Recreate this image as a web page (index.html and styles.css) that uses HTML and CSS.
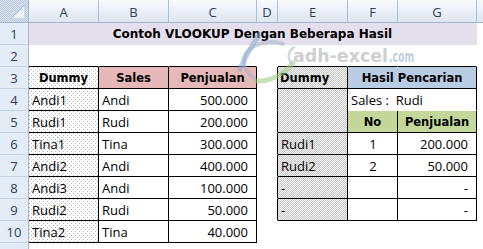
FILE: index.html
```html
<!DOCTYPE html>
<html>
<head>
<meta charset="utf-8">
<title>Contoh VLOOKUP Dengan Beberapa Hasil</title>
<link rel="stylesheet" href="styles.css">
</head>
<body>
<div class="sheet">
  <div class="corner"><svg class="corner-tri" width="28" height="22" viewBox="0 0 28 22"><polygon points="25,5 25,19 11,19" fill="#eef3fa" stroke="#b9c9dd" stroke-width="1"/></svg></div>
  <div class="ch">A</div><div class="ch">B</div><div class="ch">C</div><div class="ch">D</div><div class="ch">E</div><div class="ch">F</div><div class="ch">G</div><div class="ch"></div>

  <div class="rh">1</div><div class="c title">Contoh VLOOKUP Dengan Beberapa Hasil</div><div class="c"></div>

  <div class="rh">2</div><div class="c bb"></div><div class="c bb"></div><div class="c bb"></div><div class="c"></div><div class="c bb"></div><div class="c bb"></div><div class="c bb"></div><div class="c"></div>

  <div class="rh">3</div><div class="c hd dot br bb">Dummy</div><div class="c hd pink br bb">Sales</div><div class="c hd pink br bb">Penjualan</div><div class="c br"></div><div class="c hd left dense br bb">Dummy</div><div class="c hd blue br bb span2">Hasil Pencarian</div><div class="c"></div>

  <div class="rh">4</div><div class="c dot br bb">Andi1</div><div class="c br bb">Andi</div><div class="c num br bb">500.000</div><div class="c br"></div><div class="c dense br bb rspan2"></div><div class="c br span2">Sales :&nbsp; Rudi</div><div class="c"></div>

  <div class="rh">5</div><div class="c dot br bb">Rudi1</div><div class="c br bb">Rudi</div><div class="c num br bb">200.000</div><div class="c br"></div><div class="c hd green br bb">No</div><div class="c hd green br bb">Penjualan</div><div class="c"></div>

  <div class="rh">6</div><div class="c dot br bb">Tina1</div><div class="c br bb">Tina</div><div class="c num br bb">300.000</div><div class="c br"></div><div class="c dense br bb">Rudi1</div><div class="c mid br bb">1</div><div class="c num br bb">200.000</div><div class="c"></div>

  <div class="rh">7</div><div class="c dot br bb">Andi2</div><div class="c br bb">Andi</div><div class="c num br bb">400.000</div><div class="c br"></div><div class="c dense br bb">Rudi2</div><div class="c mid br bb">2</div><div class="c num br bb">50.000</div><div class="c"></div>

  <div class="rh">8</div><div class="c dot br bb">Andi3</div><div class="c br bb">Andi</div><div class="c num br bb">100.000</div><div class="c br"></div><div class="c dense br bb">-</div><div class="c br bb"></div><div class="c num br bb">-</div><div class="c"></div>

  <div class="rh">9</div><div class="c dot br bb">Rudi2</div><div class="c br bb">Rudi</div><div class="c num br bb">50.000</div><div class="c br"></div><div class="c dense br bb">-</div><div class="c br bb"></div><div class="c num br bb">-</div><div class="c"></div>

  <div class="rh">10</div><div class="c dot br bb">Tina2</div><div class="c br bb">Tina</div><div class="c num br bb">40.000</div><div class="c"></div><div class="c"></div><div class="c"></div><div class="c"></div><div class="c"></div>

  <div class="rh"></div><div class="c"></div><div class="c"></div><div class="c"></div><div class="c"></div><div class="c"></div><div class="c"></div><div class="c"></div><div class="c"></div>
</div>

<svg class="watermark" width="200" height="60" viewBox="228 30 200 60">
  <path d="M283,44 C264,38 244,48 244,60 C244,68 248,74 254,78" fill="none" stroke="#9fb1c4" stroke-width="4" stroke-linecap="round" opacity="0.5"/>
  <path d="M259,35 C253,44 246,55 240,69" fill="none" stroke="#86a9d4" stroke-width="5" stroke-linecap="round" opacity="0.55"/>
  <path d="M256,81 C270,82 284,74 293,63" fill="none" stroke="#9ccb7c" stroke-width="5" stroke-linecap="round" opacity="0.55"/>
  <path d="M294,47 C288,51 287,59 292,64" fill="none" stroke="#b8c8da" stroke-width="2.5" stroke-linecap="round" opacity="0.7"/>
  <text class="wm-main" x="293" y="62" textLength="95" lengthAdjust="spacingAndGlyphs">adh-excel</text>
  <text class="wm-com" transform="translate(389,62) scale(0.62,1)" x="0" y="0">.com</text>
</svg>
</body>
</html>
```

FILE: styles.css
```css
html, body {
  margin: 0;
  padding: 0;
  background: #ffffff;
  overflow: hidden;
}

body {
  width: 483px;
  height: 249px;
  position: relative;
  font-family: "Open Sans", "Liberation Sans", sans-serif;
}

.sheet {
  display: grid;
  grid-template-columns: 29px 70px 70px 88px 21px 70px 50px 79px 16px;
  grid-template-rows: 23px repeat(10, 22px) 7px;
  width: 483px;
}

.sheet > div {
  box-sizing: border-box;
  min-width: 0;
  overflow: hidden;
  white-space: nowrap;
}

.corner {
  background-color: #dde7f3;
  background-image:
    conic-gradient(from 270deg at 1px 1px, #b7c8de 0 25%, transparent 0 100%),
    conic-gradient(from 270deg at 1px 1px, #b7c8de 0 25%, transparent 0 100%);
  background-size: 2px 2px, 2px 2px;
  background-position: 0 0, 1px 1px;
  border-right: 1px solid #9eb6ce;
  border-bottom: 1px solid #9eb6ce;
  position: relative;
}

.corner-tri {
  display: block;
}

.ch {
  background: linear-gradient(#f9fbfd, #e9eef6 55%, #dfe6f0);
  border-right: 1px solid #a9bfd6;
  border-bottom: 1px solid #9eb6ce;
  display: flex;
  align-items: center;
  justify-content: center;
  font-size: 13px;
  line-height: 16px;
  color: #2b3f5c;
  padding-top: 1px;
}

.rh {
  background: #e4ecf7;
  border-right: 1px solid #9eb6ce;
  border-bottom: 1px solid #c5d3e5;
  display: flex;
  align-items: center;
  justify-content: center;
  font-size: 13px;
  line-height: 16px;
  color: #2b3f5c;
}

.c {
  border-right: 1px solid transparent;
  border-bottom: 1px solid transparent;
  display: flex;
  align-items: flex-end;
  padding: 0 2px 2px 3px;
  font-size: 13px;
  line-height: 16px;
  color: #000;
}

.br { border-right-color: #000 !important; }
.bb { border-bottom-color: #000 !important; }

.span2 { grid-column: span 2; }
.rspan2 { grid-row: span 2; }

.title {
  grid-column: span 7;
  background: #e4dfec;
  justify-content: center;
  align-items: center;
  padding: 0;
  font-family: "DejaVu Sans", sans-serif;
  font-weight: bold;
  font-size: 12px;
}

.hd {
  font-family: "DejaVu Sans", sans-serif;
  font-weight: bold;
  font-size: 11.5px;
  justify-content: center;
  align-items: center;
  padding: 1px 2px 0 2px;
}

.hd.left {
  justify-content: flex-start;
}

.num {
  justify-content: flex-end;
  padding-right: 8px;
}

.mid {
  justify-content: center;
}

.pink { background-color: #e6b9b8; }
.blue { background-color: #b8cce4; }
.green { background-color: #c4d79b; }

.dot {
  background-color: #ffffff;
  background-image:
    conic-gradient(from 270deg at 1px 1px, #b4b4b4 0 25%, transparent 0 100%),
    conic-gradient(from 270deg at 1px 1px, #b4b4b4 0 25%, transparent 0 100%);
  background-size: 4px 4px, 4px 4px;
  background-position: 0 0, 2px 2px;
}

.dense {
  background-color: #ffffff;
  background-image:
    conic-gradient(from 270deg at 1px 1px, #c0c0c0 0 25%, transparent 0 100%),
    conic-gradient(from 270deg at 1px 1px, #c0c0c0 0 25%, transparent 0 100%);
  background-size: 2px 2px, 2px 2px;
  background-position: 0 0, 1px 1px;
}

.watermark {
  position: absolute;
  left: 228px;
  top: 30px;
  pointer-events: none;
}

.wm-main {
  font-family: "DejaVu Sans", sans-serif;
  font-weight: bold;
  font-size: 18px;
  fill: #c4c4c4;
  opacity: 0.8;
}

.wm-com {
  font-family: "DejaVu Sans", sans-serif;
  font-weight: bold;
  font-size: 15px;
  fill: #b4c6dc;
  opacity: 0.85;
}
```
